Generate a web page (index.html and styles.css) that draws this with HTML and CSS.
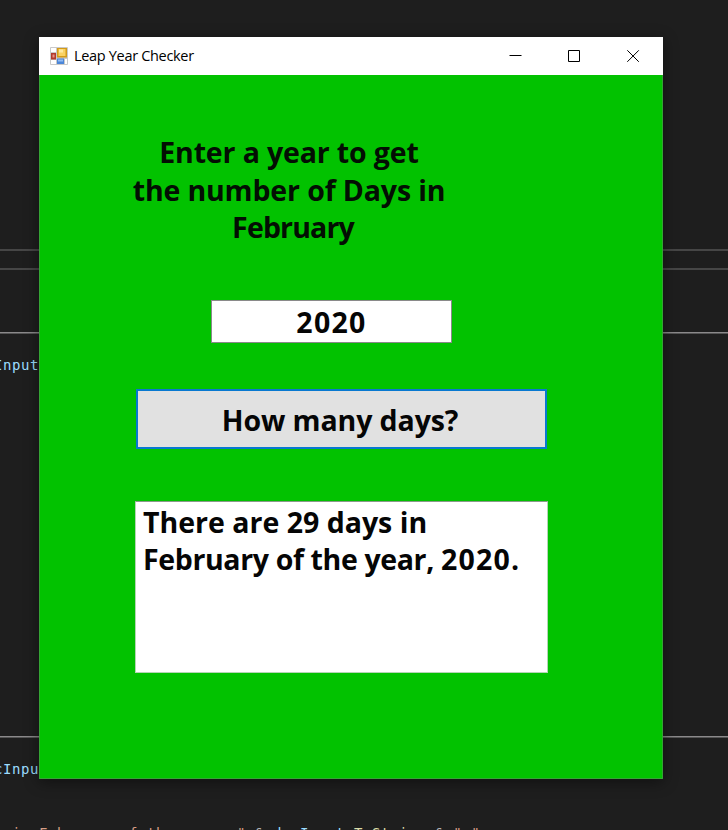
FILE: index.html
```html
<!DOCTYPE html>
<html lang="en">
<head>
<meta charset="utf-8">
<title>Leap Year Checker</title>
<link rel="stylesheet" href="styles.css">
</head>
<body>
<div class="editor">
  <div class="rule rule-thick rule-a"></div>
  <div class="rule rule-thick rule-b"></div>
  <div class="rule rule-c"></div>
  <div class="rule rule-d"></div>
  <pre class="code code-a">cInput</pre>
  <pre class="code code-b">cInpu</pre>
  <pre class="code code-c"><span class="str">in February of the year, "</span> <span class="op">&amp;</span> decInput<span class="op">.</span><span class="fn">ToString</span> <span class="op">&amp;</span> <span class="str">"."</span></pre>
</div>
<main class="window">
  <header class="titlebar">
    <svg class="app-icon" viewBox="0 0 18 18">
      <rect width="18" height="18" rx="1" fill="#c9c9c9"/>
      <path d="M1 1h5v4H1zM1 13h5v4H1zM15 12h2v5h-2z" fill="#fff"/>
      <rect x="7" y="1" width="10" height="9.500" fill="#d39a18"/>
      <rect x="8.500" y="2" width="7" height="7" fill="#fad262"/>
      <rect x="9" y="2.500" width="4" height="3" fill="#ffe9a0"/>
      <rect x="1" y="6" width="5" height="6.500" fill="#b13a2c"/>
      <rect x="2.500" y="7.500" width="2" height="3" fill="#e99186"/>
      <rect x="7" y="11.500" width="7" height="5.500" fill="#4b86d8"/>
      <rect x="8" y="12.500" width="5" height="2" fill="#91bbf3"/>
    </svg>
    <span class="caption">Leap Year Checker</span>
    <div class="controls">
      <svg viewBox="0 0 13 13"><path d="M.5 6.500h12"/></svg>
      <svg viewBox="0 0 13 13"><path d="M.5 1.500h11v11h-11z"/></svg>
      <svg viewBox="0 0 13 13"><path d="M.3 1.300l11.500 11.500M11.800 1.300L.3 12.800"/></svg>
    </div>
  </header>
  <div class="form">
    <label class="prompt" for="year"><span class="l1">Enter a year to get</span><span class="l2">the number of Days in</span><span class="l3">February</span></label>
    <input class="year" id="year" value="2020">
    <button class="ask">How many days?</button>
    <output class="result"><span class="r1">There are 29 days in</span><span class="r2">February of the year, <b class="num">2020.</b></span></output>
  </div>
</main>
</body>
</html>
```
FILE: styles.css
```css
* { box-sizing: border-box; }
body {
  margin: 0;
  position: relative;
  width: 728px;
  height: 830px;
  padding: 37px 0 0 39px;
  overflow: hidden;
  background: #1e1e1e;
  font-family: "Open Sans", "Noto Sans", sans-serif;
}
/* Code editor visible behind the dialog */
.editor { position: absolute; inset: 0; overflow: hidden; }
.rule { position: absolute; left: 0; right: 0; height: 2px; background: linear-gradient(#8b898b 50%, #555 50%); }
.rule-thick { height: 2px; background: #464646; }
.rule-a { top: 249px; }
.rule-b { top: 268px; }
.rule-c { top: 332px; }
.rule-d { top: 736px; }
.code {
  position: absolute;
  margin: 0;
  font: 14px/18px "DejaVu Sans Mono", monospace;
  letter-spacing: 0.572px;
  color: #9cdcfe;
}
.code-a { left: -15px; top: 356px; }
.code-b { left: -6px; top: 760px; }
.code-c { left: 12px; top: 824px; }
.str { color: #d69d85; }
.op { color: #b4b4b4; }
.fn { color: #dcdcaa; }

.window {
  position: relative;
  display: flex;
  flex-direction: column;
  width: 624px;
  height: 742px;
  background: #02c200;
  box-shadow: 0 3px 14px rgba(0, 0, 0, 0.45);
}
.titlebar {
  display: flex;
  align-items: center;
  height: 38px;
  padding-left: 11px;
  background: #fff;
}
.app-icon { width: 18px; height: 18px; }
.caption { margin-left: 6px; font-size: 14.500px; line-height: 20px; color: #000; white-space: nowrap; letter-spacing: -0.32px; }
.controls { display: flex; gap: 46px; margin-left: auto; padding: 0 23px 2px 0; }
.controls svg { display: block; width: 13px; height: 13px; fill: none; stroke: #000; stroke-width: 1; }
.form {
  flex: 1;
  border: 1px solid #35a535;
  border-top: 0;
  font-size: 28.500px;
  font-weight: 700;
  line-height: 37.500px;
  color: #050505;
}
.form span { display: block; white-space: nowrap; }
.prompt { display: block; width: 330px; margin: 59px 0 0 84px; text-align: center; color: #030e03; }
.l1, .l2 { letter-spacing: -0.14px; }
.l3 { letter-spacing: -0.85px; padding-left: 8px; }
.year {
  display: block;
  width: 241px;
  height: 43px;
  margin: 53px 0 0 171px;
  padding: 2px 0 0;
  border: 1px solid #8a8a8a;
  background: #fff;
  font: inherit;
  letter-spacing: 1.300px;
  color: inherit;
  text-align: center;
  border-radius: 0;
}
.ask {
  display: block;
  width: 411px;
  height: 60px;
  margin: 46px 0 0 96px;
  padding: 4px 3px 0 0;
  border: 2px solid #0878d0;
  border-radius: 0;
  background: #e1e1e1;
  font: inherit;
  letter-spacing: -0.1px;
  color: inherit;
}
.result {
  display: block;
  width: 413px;
  height: 172px;
  margin: 52px 0 0 95px;
  padding: 2px 7px;
  border: 1px solid #b5d5b5;
  border-top-color: #8a9a8a;
  background: #fff;
}
.r2 { letter-spacing: -0.37px; }
.num { font-weight: 700; letter-spacing: 1.200px; }
```
